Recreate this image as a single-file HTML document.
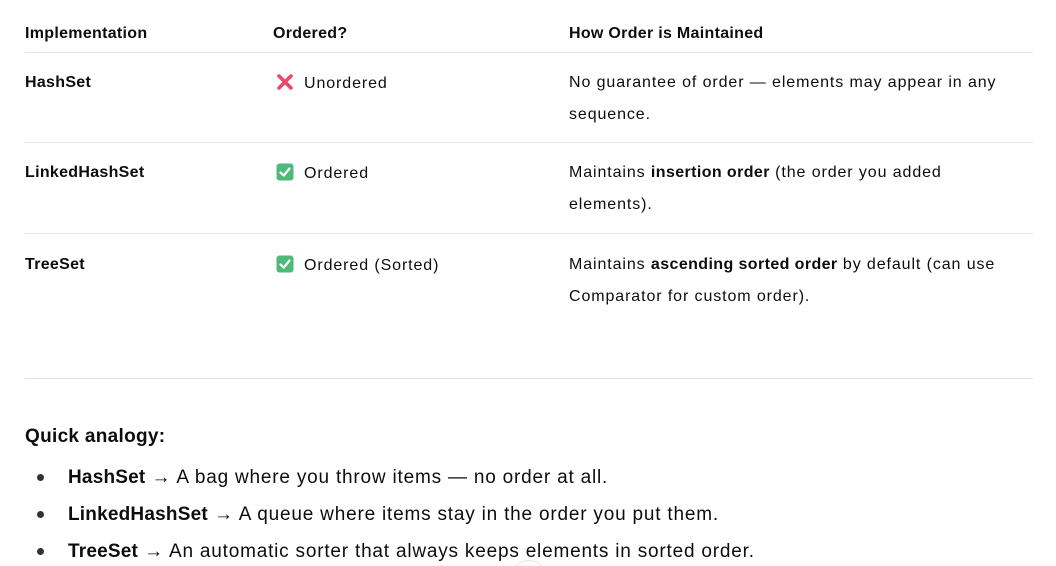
<!DOCTYPE html>
<html style="width:1056px;height:566px;overflow:hidden"><head><meta charset="utf-8"><style>
body{margin:0;width:1056px;height:566px;background:#fff;position:relative;overflow:hidden;font-family:"Liberation Sans",sans-serif;color:#0d0d0d}
.t{position:absolute;white-space:nowrap;font-size:16px;line-height:20px;letter-spacing:0.9px}
.b{font-weight:bold}
.l{position:absolute;left:25px;width:1008px;height:1px;background:#e5e5e5}
.a{position:absolute;white-space:nowrap;font-size:19px;line-height:24px;left:68px;letter-spacing:0.8px}
.dot{position:absolute;left:37px;width:7px;height:7px;border-radius:50%;background:#333}
.ic{display:inline-block;width:18px;height:18px;vertical-align:-3px;margin-right:10px}
</style></head><body>
<div class="t b" style="left:25px;top:24px;letter-spacing:0.3px">Implementation</div>
<div class="t b" style="left:273px;top:24px;letter-spacing:0.3px">Ordered?</div>
<div class="t b" style="left:569px;top:24px;letter-spacing:0.3px">How Order is Maintained</div>
<div class="l" style="top:52px"></div>

<div class="t b" style="left:25px;top:73px;letter-spacing:0.3px">HashSet</div>
<div class="t" style="left:276px;top:73px"><svg class="ic" viewBox="0 0 18 18"><path d="M3 3L15 15M15 3L3 15" stroke="#f0466a" stroke-width="3.6" stroke-linecap="round"/></svg>Unordered</div>
<div class="t" style="left:569px;top:73px">No guarantee of order — elements may appear in any</div>
<div class="t" style="left:569px;top:105px">sequence.</div>
<div class="l" style="top:142px"></div>

<div class="t b" style="left:25px;top:163px;letter-spacing:0.3px">LinkedHashSet</div>
<div class="t" style="left:276px;top:163px"><svg class="ic" viewBox="0 0 18 18"><rect x="0.5" y="0.5" width="17" height="17" rx="3" fill="#4fb97a"/><path d="M4.5 9.5L7.8 12.5L13.5 5.5" stroke="#fff" stroke-width="2.2" fill="none" stroke-linecap="round" stroke-linejoin="round"/></svg>Ordered</div>
<div class="t" style="left:569px;top:163px">Maintains <b style="letter-spacing:0.4px">insertion order</b> (the order you added</div>
<div class="t" style="left:569px;top:195px">elements).</div>
<div class="l" style="top:233px"></div>

<div class="t b" style="left:25px;top:255px;letter-spacing:0.3px">TreeSet</div>
<div class="t" style="left:276px;top:255px"><svg class="ic" viewBox="0 0 18 18"><rect x="0.5" y="0.5" width="17" height="17" rx="3" fill="#4fb97a"/><path d="M4.5 9.5L7.8 12.5L13.5 5.5" stroke="#fff" stroke-width="2.2" fill="none" stroke-linecap="round" stroke-linejoin="round"/></svg>Ordered (Sorted)</div>
<div class="t" style="left:569px;top:255px">Maintains <b style="letter-spacing:0.4px">ascending sorted order</b> by default (can use</div>
<div class="t" style="left:569px;top:287px">Comparator for custom order).</div>

<div class="l" style="top:378px;background:#e0e0e0"></div>

<div class="t b" style="left:25px;top:425px;font-size:19px;line-height:24px;letter-spacing:0.3px">Quick analogy:</div>
<div class="dot" style="top:474px"></div>
<div class="a" style="top:466px"><b style="letter-spacing:0.2px">HashSet</b> → A bag where you throw items — no order at all.</div>
<div class="dot" style="top:511px"></div>
<div class="a" style="top:503px"><b style="letter-spacing:0.2px">LinkedHashSet</b> → A queue where items stay in the order you put them.</div>
<div class="dot" style="top:548px"></div>
<div class="a" style="top:540px"><b style="letter-spacing:0.2px">TreeSet</b> → An automatic sorter that always keeps elements in sorted order.</div>
<div style="position:absolute;left:510px;top:560px;width:38px;height:6px;overflow:hidden"><div style="width:36px;height:36px;border-radius:50%;border:1px solid #e5e5e5;background:#fff"></div></div>
</body></html>
